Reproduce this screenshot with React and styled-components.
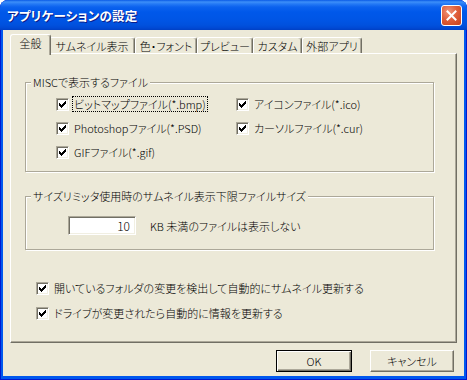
import React from 'react';
import styled, { createGlobalStyle, css } from 'styled-components';

const FONT = `"Noto Sans CJK JP", "Noto Sans", sans-serif`;

const Global = createGlobalStyle`
  html, body { margin: 0; padding: 0; background: #ffffff; }
  body {
    font-family: ${FONT};
    font-size: 11px;
    font-weight: 300;
    color: #000;
    font-feature-settings: "palt";
  }
`;

const Window = styled.div`
  width: 467px;
  height: 380px;
  display: flex;
  flex-direction: column;
  border-radius: 8px 8px 0 0;
  overflow: hidden;
  background: #0058ee;
  box-shadow: inset 1px 0 #0019cf, inset -1px 0 #0019cf, inset 0 -1px #0019cf;
`;

const TitleBar = styled.div`
  flex: none;
  height: 30px;
  box-sizing: border-box;
  display: flex;
  align-items: center;
  justify-content: space-between;
  padding: 0 5px 0 7px;
  background: linear-gradient(
    180deg,
    #0a5ae6 0px,
    #3d8ff8 2px,
    #2479f5 4px,
    #0b62ee 7px,
    #0058ea 12px,
    #0055e5 20px,
    #0051de 25px,
    #0049d4 28px,
    #0040c4 30px
  );
`;

const Title = styled.span`
  color: #fff;
  font-weight: bold;
  font-size: 12.5px;
  letter-spacing: 0.2px;
  text-shadow: 1px 1px 0 #0a1d8a;
`;

const CloseButton = styled.div`
  width: 21px;
  height: 21px;
  margin-top: 1px;
  box-sizing: border-box;
  border: 1px solid #fff;
  border-radius: 3px;
  background: radial-gradient(circle at 35% 30%, #f0957a 0%, #e0603c 45%, #c8401a 100%);
  display: flex;
  align-items: center;
  justify-content: center;
`;

const Client = styled.div`
  flex: 1;
  margin: 0 3px 4px;
  padding: 4px 7px 0;
  background: #ece9d8;
  display: flex;
  flex-direction: column;
`;

const TabStrip = styled.div`
  height: 19px;
  display: flex;
  align-items: flex-end;
  padding-left: 2px;
  position: relative;
  z-index: 1;
`;

const Tab = styled.div`
  box-sizing: border-box;
  width: ${(p) => p.$w}px;
  height: 16px;
  padding-top: 1px;
  line-height: 14px;
  text-align: center;
  white-space: nowrap;
  border: 1px solid #fff;
  border-bottom: none;
  border-right-color: #716f64;
  border-radius: 3px 3px 0 0;
  box-shadow: inset -1px 0 #aca899;
  background: #ece9d8;
  ${(p) =>
    p.$active &&
    css`
      height: 21px;
      margin: 0 -2px -2px;
      position: relative;
      z-index: 2;
    `}
`;

const Panel = styled.div`
  box-sizing: border-box;
  height: 290px;
  border: 1px solid #fff;
  border-right-color: #716f64;
  border-bottom-color: #716f64;
  box-shadow: inset -1px -1px 0 #aca899;
  padding: 21px 0 0 14px;
  display: flex;
  flex-direction: column;
  align-items: flex-start;
`;

const Group = styled.fieldset`
  margin: ${(p) => p.$top || 0}px 0 0;
  padding: 0;
  width: 409px;
  box-sizing: border-box;
  min-inline-size: auto;
  border: 1px solid #aca899;
  box-shadow: inset 1px 1px 0 #fff, 1px 1px 0 #fff;
`;

const Legend = styled.legend`
  margin-left: 5px;
  padding: 0 2px;
  line-height: 14px;
  background: #ece9d8;
`;

const CheckGrid = styled.div`
  display: grid;
  grid-template-columns: 180px auto;
  grid-auto-rows: 24px;
  align-items: center;
  padding: 3px 0 7px 30px;
`;

const SizeRow = styled.div`
  display: flex;
  align-items: center;
  gap: 14px;
  padding: 13px 0 14px 42px;
`;

const NumberField = styled.input`
  width: 68px;
  height: 19px;
  box-sizing: border-box;
  font: inherit;
  font-size: 12px;
  color: #000;
  text-align: right;
  padding: 0 5px 0 2px;
  background: #fff;
  border: 1px solid;
  border-color: #aca899 #fff #fff #aca899;
  box-shadow: inset 1px 1px 0 #716f64, inset -1px -1px 0 #f1efe2;
  outline: none;
`;

const OptionList = styled.div`
  display: flex;
  flex-direction: column;
  gap: 1px;
  margin: 26px 0 0 11px;
`;

const CheckRow = styled.label`
  height: 24px;
  display: flex;
  align-items: center;
  gap: 4px;
  white-space: nowrap;
`;

const Box = styled.span`
  flex: none;
  width: 13px;
  height: 13px;
  box-sizing: border-box;
  background: #fff;
  border: 1px solid;
  border-color: #aca899 #fff #fff #aca899;
  box-shadow: inset 1px 1px 0 #716f64, inset -1px -1px 0 #f1efe2;
  display: flex;
`;

const LabelText = styled.span`
  padding: 0 1px;
  line-height: 14px;
  ${(p) =>
    p.$focus &&
    css`
      outline: 1px dotted #000;
      outline-offset: 0;
    `}
`;

const ButtonRow = styled.div`
  display: flex;
  justify-content: flex-end;
  gap: 18px;
  margin-top: 7px;
  padding-right: 3px;
`;

const PushButton = styled.button`
  width: ${(p) => p.$w}px;
  height: 22px;
  padding: 0;
  font: inherit;
  color: #000;
  background: #ece9d8;
  border: 1px solid;
  border-color: #fff #716f64 #716f64 #fff;
  box-shadow: inset -1px -1px 0 #aca899;
  ${(p) =>
    p.$default &&
    css`
      border-color: #000;
      box-shadow: inset 1px 1px 0 #fff, inset -1px -1px 0 #716f64, inset -2px -2px 0 #aca899;
    `}
`;

const Check = () => (
  <svg width="11" height="11" viewBox="0 0 11 11" shapeRendering="crispEdges">
    <rect x="2" y="4" width="1" height="3" fill="#000" />
    <rect x="3" y="5" width="1" height="3" fill="#000" />
    <rect x="4" y="6" width="1" height="3" fill="#000" />
    <rect x="5" y="5" width="1" height="3" fill="#000" />
    <rect x="6" y="4" width="1" height="3" fill="#000" />
    <rect x="7" y="3" width="1" height="3" fill="#000" />
    <rect x="8" y="2" width="1" height="3" fill="#000" />
  </svg>
);

const CheckBox = ({ label, focus }) => (
  <CheckRow>
    <Box>
      <Check />
    </Box>
    <LabelText $focus={focus}>{label}</LabelText>
  </CheckRow>
);

const tabs = [
  { label: '全般', w: 41, active: true },
  { label: 'サムネイル表示', w: 86 },
  { label: '色・フォント', w: 62 },
  { label: 'プレビュー', w: 56 },
  { label: 'カスタム', w: 49 },
  { label: '外部アプリ', w: 60 },
];

export default function App() {
  return (
    <>
      <Global />
      <Window>
        <TitleBar>
          <Title>アプリケーションの設定</Title>
          <CloseButton>
            <svg width="11" height="11" viewBox="0 0 11 11">
              <path d="M1.5 1.5 L9.5 9.5 M9.5 1.5 L1.5 9.5" stroke="#fff" strokeWidth="2" strokeLinecap="square" />
            </svg>
          </CloseButton>
        </TitleBar>
        <Client>
          <TabStrip>
            {tabs.map((t) => (
              <Tab key={t.label} $w={t.w} $active={t.active}>
                {t.label}
              </Tab>
            ))}
          </TabStrip>
          <Panel>
            <Group>
              <Legend>MISCで表示するファイル</Legend>
              <CheckGrid>
                <CheckBox label="ビットマップファイル(*.bmp)" focus />
                <CheckBox label="アイコンファイル(*.ico)" />
                <CheckBox label="Photoshopファイル(*.PSD)" />
                <CheckBox label="カーソルファイル(*.cur)" />
                <CheckBox label="GIFファイル(*.gif)" />
              </CheckGrid>
            </Group>
            <Group $top={17}>
              <Legend>サイズリミッタ使用時のサムネイル表示下限ファイルサイズ</Legend>
              <SizeRow>
                <NumberField defaultValue="10" />
                <span>KB 未満のファイルは表示しない</span>
              </SizeRow>
            </Group>
            <OptionList>
              <CheckBox label="開いているフォルダの変更を検出して自動的にサムネイル更新する" />
              <CheckBox label="ドライブが変更されたら自動的に情報を更新する" />
            </OptionList>
          </Panel>
          <ButtonRow>
            <PushButton $w={76} $default>OK</PushButton>
            <PushButton $w={84}>キャンセル</PushButton>
          </ButtonRow>
        </Client>
      </Window>
    </>
  );
}
